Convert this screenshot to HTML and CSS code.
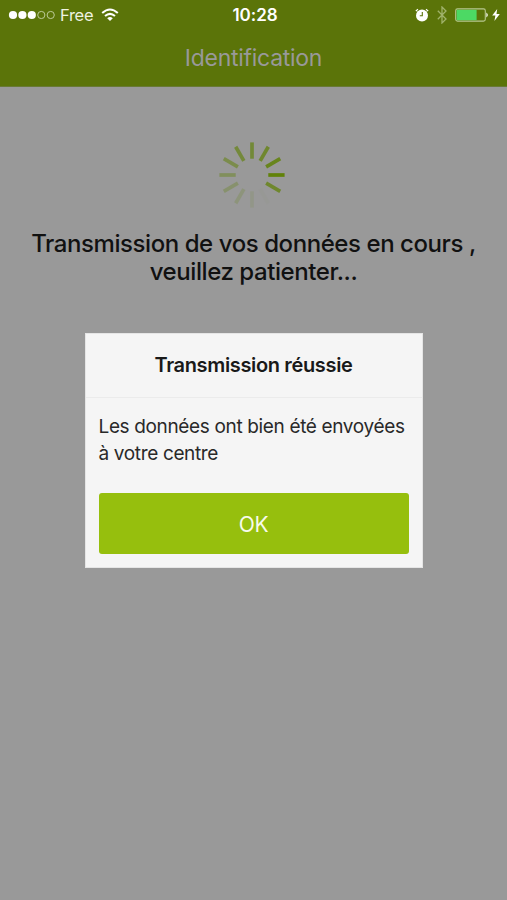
FILE: index.html
```html
<!DOCTYPE html>
<html lang="fr">
<head>
<meta charset="utf-8">
<title>Identification</title>
<link rel="stylesheet" href="styles.css">
</head>
<body>
<div class="screen">
  <header class="header">
    <div class="status">
      <div class="status-left">
        <svg class="signal" width="48" height="12" viewBox="0 0 48 12"><g fill="#fff"><circle cx="5" cy="6" r="4.1"/><circle cx="14.4" cy="6" r="4.1"/><circle cx="23.8" cy="6" r="4.1"/></g><g fill="none" stroke="#bccb98" stroke-width="1"><circle cx="33.3" cy="6" r="3.6"/><circle cx="42.7" cy="6" r="3.6"/></g></svg>
        <span class="carrier">Free</span>
        <svg class="wifi" width="18" height="14" viewBox="0 0 18 14"><g fill="none" stroke="#fff" stroke-width="2"><path d="M1.2 5.1Q9-2 16.8 5.1"/><path d="M4 8.1Q9 3.6 14 8.1"/></g><path d="M6.2 10.2Q9 7.9 11.8 10.2L9 13Z" fill="#fff"/></svg>
      </div>
      <span class="time">10:28</span>
      <div class="status-right">
        <svg width="14" height="14" viewBox="0 0 14 14"><circle cx="7" cy="7.4" r="6" fill="#fff"/><path d="M.9 3.2A7 7 0 0 1 3 1.2M11 1.2A7 7 0 0 1 13.1 3.2" fill="none" stroke="#fff" stroke-width="1.3"/><path d="M7.3 4V7.8H4.8" fill="none" stroke="#5b7409" stroke-width="1.1"/></svg>
        <svg class="bluetooth" width="10" height="18" viewBox="0 0 10 18"><path d="M.8 4.8L9 13L5 17V1L9 5L.8 13.2" fill="none" stroke="#a0b26b" stroke-width="1.3"/></svg>
        <svg class="battery" width="34" height="14" viewBox="0 0 34 14"><rect x=".7" y=".9" width="29.6" height="12.2" rx="1.8" fill="none" stroke="#b8c791" stroke-width="1.1"/><rect x="1.6" y="1.8" width="20" height="10.4" fill="#4cd964"/><path d="M31.4 4.4Q34.2 7 31.4 9.6Z" fill="#fff"/></svg>
        <svg class="bolt" width="8" height="12" viewBox="0 0 8 12"><path d="M5.2 0L.2 6.6H3.4L2.4 12L7.8 4.9H4.5Z" fill="#fff"/></svg>
      </div>
    </div>
    <h1 class="title">Identification</h1>
  </header>
  <main class="content">
    <svg class="spinner" width="70" height="70" viewBox="-35 -35 70 70">
      <g stroke="#618209" stroke-width="3.7">
        <path d="M16.3 0H32.6"/>
        <path d="M16.3 0H32.6" transform="rotate(-30)" opacity=".86"/>
        <path d="M16.3 0H32.6" transform="rotate(-60)" opacity=".74"/>
        <path d="M16.3 0H32.6" transform="rotate(-90)" opacity=".68"/>
        <path d="M16.3 0H32.6" transform="rotate(-120)" opacity=".65"/>
        <path d="M16.3 0H32.6" transform="rotate(-150)" opacity=".53"/>
        <path d="M16.3 0H32.6" transform="rotate(180)" opacity=".42"/>
        <path d="M16.3 0H32.6" transform="rotate(150)" opacity=".3"/>
        <path d="M16.3 0H32.6" transform="rotate(120)" opacity=".2"/>
        <path d="M16.3 0H32.6" transform="rotate(90)" opacity=".11"/>
        <path d="M16.3 0H32.6" transform="rotate(60)" opacity=".02"/>
        <path d="M16.3 0H32.6" transform="rotate(30)" opacity=".75"/>
      </g>
    </svg>
    <p class="message">Transmission de vos données en cours ,<br>veuillez patienter...</p>
    <section class="dialog">
      <h2 class="dialog-title">Transmission réussie</h2>
      <div class="dialog-body">
        <p class="dialog-text">Les données ont bien été envoyées<br>à votre centre</p>
        <button class="ok">OK</button>
      </div>
    </section>
  </main>
</div>
</body>
</html>
```
FILE: styles.css
```css
* { box-sizing: border-box; }
body { margin: 0; font-family: Inter, "Liberation Sans", sans-serif; }
h1, h2, p { margin: 0; font-weight: 400; }
svg { display: block; flex: none; }
.screen { width: 507px; height: 900px; background: #999; overflow: hidden; }
.header { height: 87px; background: #5b7409; border-bottom: 1px solid #687a35; }
.status { height: 30px; display: grid; grid-template-columns: 1fr auto 1fr; align-items: center; padding: 0 7px 0 8px; color: #fff; }
.status-left, .status-right { display: flex; align-items: center; }
.status-right { justify-content: flex-end; }
.carrier { font-size: 16.5px; line-height: 20px; margin-left: 4px; width: 33px; letter-spacing: -.3px; color: #eef2e2; }
.wifi { margin-left: 8px; }
.time { font-size: 17px; font-weight: 600; line-height: 20px; padding-left: 2px; letter-spacing: -.05px; }
.bluetooth { margin-left: 8px; }
.battery { margin-left: 8px; }
.bolt { margin-left: 3px; }
.title { text-align: center; font-size: 23px; line-height: 28px; margin-top: 14px; color: #999; letter-spacing: -.28px; }
.content { display: flex; flex-direction: column; align-items: center; }
.spinner { margin-top: 53px; margin-right: 3px; }
.message { margin-top: 20px; text-align: center; font-size: 24px; line-height: 28px; font-weight: 500; letter-spacing: -.43px; color: #111; white-space: nowrap; }
.dialog { width: 338px; height: 235px; margin-top: 47px; background: #f5f5f5; border: 1px solid #e5e5e5; }
.dialog-title { height: 64px; line-height: 63px; text-align: center; font-size: 20px; font-weight: 600; letter-spacing: -.35px; color: #191919; border-bottom: 1px solid #ebebeb; }
.dialog-body { padding: 15px 13px 13px; }
.dialog-text { font-size: 19px; line-height: 27px; letter-spacing: -.35px; color: #292929; white-space: nowrap; }
.ok { display: block; width: 310px; height: 61px; margin-top: 26px; padding: 2px 0 0; border: 0; border-radius: 3px; background: #96bf0d; color: #f7faec; font: 400 21px/59px Inter, "Liberation Sans", sans-serif; letter-spacing: -.4px; }
```
